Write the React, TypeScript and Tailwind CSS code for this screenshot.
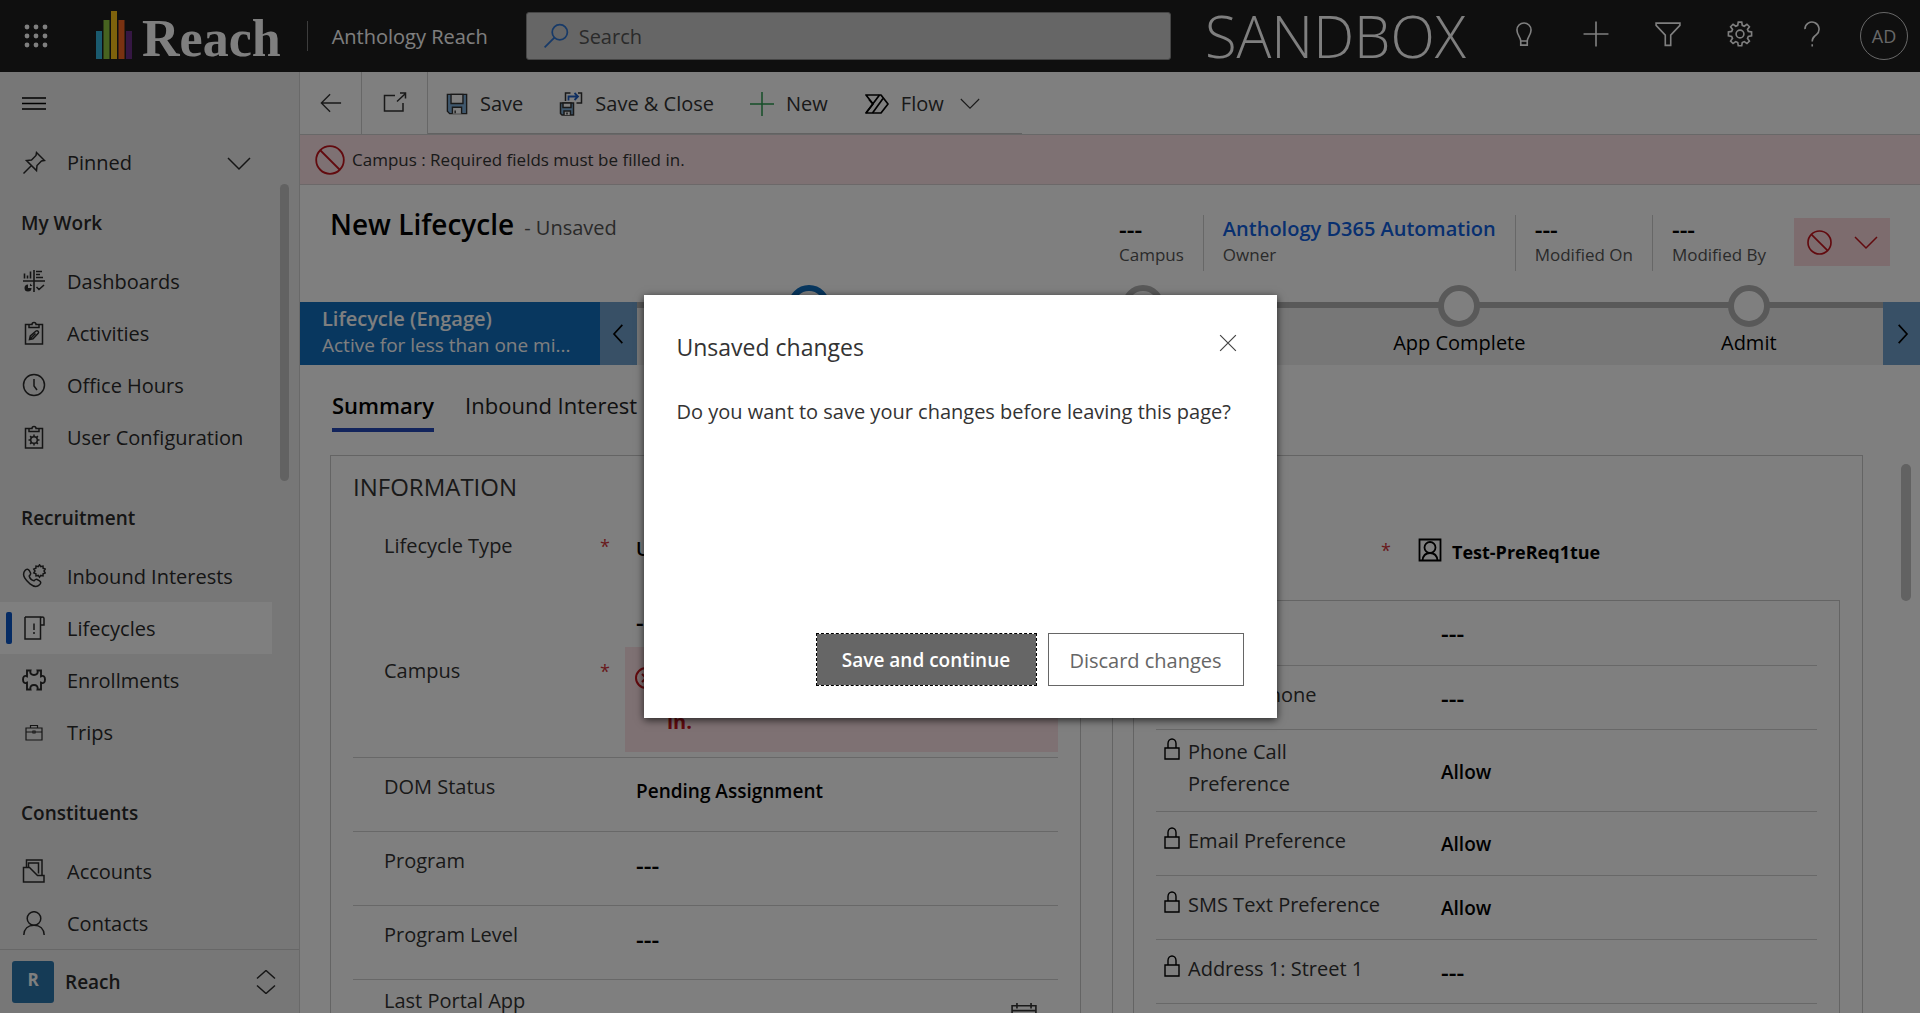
import type { ReactNode } from "react";

type IconProps = { w?: number; h?: number; vb?: string; sw?: number; className?: string; children: ReactNode };

function Svg({ w = 24, h = 24, vb = "0 0 24 24", sw = 1.5, className = "", children }: IconProps) {
  return (
    <svg
      width={w}
      height={h}
      viewBox={vb}
      fill="none"
      stroke="currentColor"
      strokeWidth={sw}
      aria-hidden="true"
      className={`shrink-0 ${className}`}
    >
      {children}
    </svg>
  );
}

const gearPath =
  "M10.4 1h3.2l.5 3 1.8.8 2.500-1.800 2.300 2.300-1.800 2.500.8 1.800 3 .5v3.600l-3 .5-.8 1.800 1.800 2.500-2.300 2.300-2.500-1.800-1.800.8-.5 3h-3.200l-.5-3-1.800-.8-2.500 1.800-2.300-2.300 1.800-2.500-.8-1.800-3-.5v-3.600l3-.5.8-1.800-1.800-2.500 2.300-2.300 2.500 1.800 1.800-.8z";

/* ---------- top bar ---------- */

function Waffle() {
  const at = [3, 12, 21];
  return (
    <Svg>
      {at.map((y) => at.map((x) => <circle key={`${x}-${y}`} cx={x} cy={y} r="2.4" fill="currentColor" stroke="none" />))}
    </Svg>
  );
}

function ReachLogo() {
  return (
    <span className="flex items-end gap-[10px]">
      <svg width="36" height="48" viewBox="0 0 36 48" aria-hidden="true" className="mb-[2px]">
        <rect x="0" y="20" width="6" height="28" fill="#35b4dc" />
        <rect x="7.5" y="9" width="6" height="39" fill="#8fc640" />
        <rect x="15" y="0" width="6" height="48" fill="#fcc419" />
        <rect x="22.5" y="9" width="6" height="39" fill="#f26522" />
        <rect x="30" y="20" width="6" height="28" fill="#6b2f87" />
      </svg>
      <span className="text-[52px] leading-[44px] font-bold font-['Liberation_Serif',serif]">Reach</span>
    </span>
  );
}

function TopBar() {
  const iconBtn = "flex w-[72px] justify-center";
  return (
    <header className="flex h-[72px] shrink-0 items-center bg-[#1e1e1e] pr-3 text-white">
      <button type="button" aria-label="App launcher" className="ml-6 flex">
        <Waffle />
      </button>
      <div className="ml-12">
        <ReachLogo />
      </div>
      <span className="ml-[26px] h-[30px] w-px bg-[#7a7a7a]" />
      <span className="ml-6 pt-[2px] text-[20px] whitespace-nowrap">Anthology Reach</span>
      <label className="ml-[38px] flex h-12 flex-1 items-center gap-[10px] rounded-[3px] border border-[#8a8a8a] bg-[#cccccc] px-4 text-[#2f74d0]">
        <Svg w={26} h={26} sw={1.6}>
          <circle cx="15.5" cy="8.5" r="7" />
          <path d="M10.5 13.5 1.5 22.5" />
        </Svg>
        <input
          type="text"
          aria-label="Search"
          placeholder="Search"
          className="min-w-0 flex-1 bg-transparent pt-[2px] text-[20px] text-[#555] outline-none placeholder:text-[#555]"
        />
      </label>
      <span className="mx-[34px] text-[58px] leading-[72px] font-light">SANDBOX</span>
      <div className="-ml-3 flex items-center">
        <button type="button" aria-label="Ideas" className={iconBtn}>
          <Svg w={26} h={26} className="-mt-1">
            <path d="M9 18.5c0-3.500-3.500-5.500-3.500-10.200a6.500 6.500 0 0 1 13 0c0 4.700-3.500 6.700-3.500 10.200zM9 18.500v3.800h6v-3.800" />
          </Svg>
        </button>
        <button type="button" aria-label="Add" className={iconBtn}>
          <Svg w={26} h={26} className="-mt-1">
            <path d="M12 0.500v23M0.500 12h23" />
          </Svg>
        </button>
        <button type="button" aria-label="Filter" className={iconBtn}>
          <Svg w={26} h={26} className="-mt-1">
            <path d="M1 2h22v2l-8.500 9v9.500h-5V13L1 4z" />
          </Svg>
        </button>
        <button type="button" aria-label="Settings" className={iconBtn}>
          <Svg w={26} h={26} className="-mt-1">
            <path d={gearPath} />
            <circle cx="12" cy="12" r="3.600" />
          </Svg>
        </button>
        <button type="button" aria-label="Help" className={iconBtn}>
          <Svg w={26} h={26} className="-mt-1">
            <path d="M5.500 7.500a6.500 6.500 0 1 1 10.600 5c-2.600 2.100-3.900 3.200-3.900 6.500M12.200 21.500v2" />
          </Svg>
        </button>
      </div>
      <button
        type="button"
        aria-label="Account"
        className="ml-3 flex h-12 w-12 items-center justify-center rounded-full border border-[#d0d0d0] text-[18px] text-[#d0d0d0]"
      >
        AD
      </button>
    </header>
  );
}

/* ---------- side navigation ---------- */

const navIcons: Record<string, ReactNode> = {
  Dashboards: (
    <Svg sw={1.6}>
      <path d="M12 1v22M1 12h22M2.500 4.500v5M5.500 6.500v3M8.500 2.500v7M14 2.500h6M14 5.500h4M14 8.500h7M14.500 18l2.500 2.500 5-4.500" />
      <path d="M6 15.500a3.500 3.500 0 1 0 3.500 3.500H6zM8 14.500v2.500h2.500z" fill="currentColor" stroke="none" />
    </Svg>
  ),
  Activities: (
    <Svg>
      <path d="M8 3.500H3.500v19.500h17V3.500H16M7 6.500V3.500h3a2 2 0 0 1 4 0h3v3z" />
      <path d="M7.500 18.500l.8-3.500 5.700-5c1.500-1 3.300.800 2.200 2.200l-5.200 5.600zM8.500 17.500l5-5" />
    </Svg>
  ),
  "Office Hours": (
    <Svg>
      <circle cx="12" cy="12" r="10.500" />
      <path d="M12 6v7l3 4" />
    </Svg>
  ),
  "User Configuration": (
    <Svg>
      <path d="M8 3.500H3.500v19.500h17V3.500H16M7 6.500V3.500h3a2 2 0 0 1 4 0h3v3z" />
      <circle cx="12" cy="15" r="3.300" />
      <path d="M12 9.500v2M12 18.500v2M6.500 15h2M15.500 15h2M8.100 11.100l1.500 1.500M14.400 17.400l1.500 1.500M15.900 11.100l-1.500 1.500M9.600 17.400l-1.500 1.500" />
    </Svg>
  ),
  "Inbound Interests": (
    <Svg>
      <path d="M3 6.500c1.500-2 3.300-1.500 4.200 0l1.300 2.300c.7 1.300-.3 2.200-1.300 3.200.5 2 2.800 4.300 4.800 4.800 1-1 2-2 3.200-1.300l2.300 1.300c1.500 1 1.700 2.500 0 4-2.300 2.300-6 1.800-9.500-1C4.500 17-1 11.500 3 6.500z" />
      <path d="M17.500.8l1.300 1.800 2.200-.5.1 2.200 2.100.8-1.200 1.900 1.200 1.900-2.100.800-.1 2.200-2.200-.5-1.300 1.800-1.300-1.800-2.200.5-.1-2.200-2.100-.8L13 7l-1.200-1.900 2.100-.8.100-2.200 2.200.5z" />
    </Svg>
  ),
  Lifecycles: (
    <Svg>
      <path d="M3 1h15.500v5M18.500 9v14H3V1M18.500 2.500c0-2 3.500-2 3.500 0V9h-3.500z" />
      <path d="M12 7.500v6.500M12 16v2" />
    </Svg>
  ),
  Enrollments: (
    <Svg sw={1.9}>
      <path d="M5 2.500h3.500c-.8 3 1 4.500 3.500 4.500s4.300-1.500 3.500-4.500H19v5.800c2.500-1.300 4 .5 4 3.200s-1.500 4.500-4 3.200v6.800h-3.500c.8-3-1-4.500-3.500-4.500s-4.300 1.500-3.500 4.500H5v-6.800c-2.500 1.300-4-.5-4-3.200s1.500-4.500 4-3.200z" />
    </Svg>
  ),
  Trips: (
    <Svg sw={1.2}>
      <path d="M4 8h16v12H4zM8.500 8V5.500h7V8M4 12h6.500M13.500 12H20M11 11h2v2h-2z" />
    </Svg>
  ),
  Accounts: (
    <Svg>
      <path d="M4.500 8V1h15.500v15" />
      <path d="M6.500 8V4h10v10.500" />
      <path d="M1.500 8.500h6l8 8h6.500v6.500H1.500z" />
    </Svg>
  ),
  Contacts: (
    <Svg>
      <circle cx="12" cy="7.500" r="6.800" />
      <path d="M1.800 24c.3-6 4.200-9.700 10.200-9.700S21.900 18 22.200 24" />
    </Svg>
  ),
};

const navSections = [
  { title: "My Work", items: ["Dashboards", "Activities", "Office Hours", "User Configuration"] },
  { title: "Recruitment", items: ["Inbound Interests", "Lifecycles", "Enrollments", "Trips"] },
  { title: "Constituents", items: ["Accounts", "Contacts"] },
];

function SideNav() {
  return (
    <nav aria-label="Site map" className="flex w-[300px] shrink-0 flex-col border-r border-[#d2d2d2] bg-[#efefef] text-[#2b2b2b]">
      <button type="button" aria-label="Toggle navigation" className="mt-5 ml-5 flex w-fit text-black">
        <Svg w={26}>
          <path d="M1 6h24M1 11.500h24M1 17h24" />
        </Svg>
      </button>
      <button type="button" className="mt-[26px] flex h-[42px] shrink-0 items-center px-[22px] text-left">
        <Svg>
          <path d="M14.500 1.500l8 8-3 .5-4.500 4.500-.5 5-10-10 5-.5L14 4.500zM9.500 14.500L1.500 22.500" />
        </Svg>
        <span className="ml-[21px] flex-1 text-[20px]">Pinned</span>
        <Svg className="mr-[26px]">
          <path d="M1 7l11 11L23 7" />
        </Svg>
      </button>
      <div className="relative min-h-0 flex-1 overflow-hidden pt-1">
        <span className="absolute top-0 right-[10px] h-[297px] w-[9px] rounded-full bg-[#c4c4c4]" />
        {navSections.map((section) => (
          <section key={section.title} className={section.title === "My Work" ? "" : "pt-5"}>
            <h2 className="h-[67px] pt-[19px] pl-[21px] text-[19px] leading-8 font-semibold">{section.title}</h2>
            <ul>
              {section.items.map((item) => {
                const current = item === "Lifecycles";
                return (
                  <li key={item}>
                    <a
                      href="#"
                      aria-current={current ? "page" : undefined}
                      className={`relative flex h-[52px] w-[272px] items-center pl-[22px] text-[20px] ${current ? "bg-white" : ""}`}
                    >
                      {current && <span className="absolute top-[10px] left-[6px] h-8 w-[6px] rounded-[2px] bg-[#0b57c9]" />}
                      {navIcons[item]}
                      <span className="ml-[21px] pt-[2px]">{item}</span>
                    </a>
                  </li>
                );
              })}
            </ul>
          </section>
        ))}
      </div>
      <button type="button" className="flex h-16 shrink-0 items-center border-t border-[#cfcfcf] pl-3 text-left">
        <span className="flex h-[42px] w-[42px] items-center justify-center rounded-[3px] bg-[#2b76ad] pb-1 text-[17px] font-bold text-white">R</span>
        <span className="ml-[11px] flex-1 pt-[2px] text-[19px] font-semibold">Reach</span>
        <Svg className="mr-[21px]">
          <path d="M3 8.500l9-8 9 8M3 15.500l9 8 9-8" />
        </Svg>
      </button>
    </nav>
  );
}

/* ---------- command bar ---------- */

function CommandBar() {
  const cmd = "flex items-center gap-3";
  return (
    <div className="flex h-[63px] shrink-0 border-b border-[#d0d0d0] text-[20px] text-[#333]">
      <button type="button" aria-label="Back" className="flex w-[62px] items-center justify-center border-r border-[#cfcfcf]">
        <Svg w={22} h={22}>
          <path d="M23 12H1.500M11 2.500L1.500 12l9.500 9.500" />
        </Svg>
      </button>
      <button type="button" aria-label="Open in new window" className="flex w-[66px] items-center justify-center border-r border-[#cfcfcf]">
        <Svg>
          <path d="M12 4.500H1.500v15.500H20v-8M14 10.500L22.500 2.500M17 2h5.500v5.500" />
        </Svg>
      </button>
      <div className="flex w-[594px] gap-9 border-b border-[#c4c4c4] pt-[2px] pl-[18px]">
        <button type="button" className={cmd}>
          <Svg w={22} h={22}>
            <path d="M1.500 1.500h21v21H4l-2.500-2.500z" fill="#7fb0dc" />
            <path d="M5.500 1.500h13v10h-13z" fill="#fff" />
            <path d="M7 22.500v-7h10v7M10 22v-3" fill="#fff" />
          </Svg>
          <span>Save</span>
        </button>
        <button type="button" className={cmd}>
          <Svg w={24} h={25}>
            <path d="M1.500 11.500h13v12H3l-1.500-1.500z" fill="#7fb0dc" />
            <path d="M4 11.500h8v4.500H4zM5 23.500v-4h6.500v4M8 23v-2" fill="#fff" />
            <path d="M6.500 9.500v-8h5M19 1.500h3.500v10h-5" />
            <path d="M9.500 9V5h9M15.500 1.500L19 5l-3.500 3.500" stroke="#1f5fc4" strokeWidth="1.800" />
          </Svg>
          <span>Save &amp; Close</span>
        </button>
        <button type="button" className={cmd}>
          <Svg className="text-[#2a9d50]">
            <path d="M12 0v24M0 12h24" />
          </Svg>
          <span>New</span>
        </button>
        <button type="button" className={cmd}>
          <Svg w={25} h={22} vb="0 0 25 22" sw={1.7} className="text-black">
            <path d="M2 2H17L24 11 17 20H2L9 11z" strokeLinejoin="round" />
            <path d="M2 20L15.500 2M8.500 20L19 5.500" />
            <path d="M5 6.500L9 11" />
          </Svg>
          <span>Flow</span>
          <Svg w={20} h={20} className="ml-1" sw={1.3}>
            <path d="M1 6l11 11L23 6" />
          </Svg>
        </button>
      </div>
    </div>
  );
}

function ProhibitIcon({ size }: { size: number }) {
  return (
    <Svg w={size} h={size} vb="0 0 30 30" sw={size > 26 ? 1.8 : 2} className="text-[#c4141c]">
      <circle cx="15" cy="15" r="13.800" />
      <path d="M5.500 5.500l19 19" />
    </Svg>
  );
}

/* ---------- record header ---------- */

const facts = [
  { label: "Campus", value: "---" },
  { label: "Owner", value: "Anthology D365 Automation", link: true },
  { label: "Modified On", value: "---" },
  { label: "Modified By", value: "---" },
];

function RecordHeader() {
  return (
    <div className="flex h-[117px] shrink-0 pt-[30px] pr-[30px] pl-[30px]">
      <div className="-mt-3 flex h-9 flex-1 items-baseline gap-[10px]">
        <h1 className="text-[28px] font-semibold text-black">New Lifecycle</h1>
        <span className="text-[20px] text-[#555]">- Unsaved</span>
      </div>
      <dl className="flex h-[56px] divide-x divide-[#cfcfcf]">
        {facts.map((f) => (
          <div key={f.label} className="flex flex-col-reverse justify-end px-[19px]">
            <dt className="text-[17px] leading-[24px] text-[#555]">{f.label}</dt>
            <dd className={`leading-[28px] font-semibold text-black ${f.link ? "text-[20px]" : "text-[24px]"}`}>
              {f.link ? (
                <a href="#" className="text-[#1160e0]">
                  {f.value}
                </a>
              ) : (
                f.value
              )}
            </dd>
          </div>
        ))}
      </dl>
      <button
        type="button"
        aria-label="Show notifications"
        className="mt-[3px] ml-[9px] flex h-12 w-24 items-center justify-center gap-[22px] bg-[#fbd8dc] text-[#c4141c]"
      >
        <ProhibitIcon size={25} />
        <Svg>
          <path d="M1 7l11 11L23 7" />
        </Svg>
      </button>
    </div>
  );
}

/* ---------- process flow ---------- */

const stages = [
  { name: "", grow: "flex-[344]", active: true },
  { name: "", grow: "flex-[322]", active: false },
  { name: "App Complete", grow: "flex-[310]", active: false },
  { name: "Admit", grow: "flex-[268]", active: false },
];

function ProcessFlow() {
  return (
    <div className="flex h-[63px] shrink-0">
      <button type="button" className="w-[300px] bg-[#106ebe] pb-1 pl-[22px] text-left text-white">
        <span className="block text-[20px] leading-[27px] font-semibold">Lifecycle (Engage)</span>
        <span className="block text-[19px] leading-[27px]">Active for less than one mi...</span>
      </button>
      <button type="button" aria-label="Previous stage" className="flex w-[37px] items-center justify-center bg-[#70a0cc] text-black">
        <Svg w={20} h={20} sw={2}>
          <path d="M16 1L6 12l10 11" />
        </Svg>
      </button>
      <ol className="flex flex-1 border-t-[6px] border-[#b2b2b2] bg-[#efefef]">
        {stages.map((s, i) => (
          <li key={i} className={`${s.grow} -mt-[23px] flex flex-col items-center`}>
            <span className={`h-[42px] w-[42px] rounded-full border-[6px] bg-white ${s.active ? "border-[#106ebe]" : "border-[#b2b2b2]"}`} />
            <span className="text-[20px] leading-[32px] text-black">{s.name}</span>
          </li>
        ))}
      </ol>
      <button type="button" aria-label="Next stage" className="flex w-[37px] items-center justify-center bg-[#70a0cc] text-black">
        <Svg w={20} h={20} sw={2}>
          <path d="M8 1l10 11L8 23" />
        </Svg>
      </button>
    </div>
  );
}

/* ---------- form ---------- */

function FieldValue({ value }: { value: string }) {
  return <span className={value === "---" ? "text-[24px]" : "text-[19px]"}>{value}</span>;
}

function LeftRow({ label, value, tight, icon }: { label: string; value: string; tight?: boolean; icon?: ReactNode }) {
  return (
    <div className="flex h-[74px] shrink-0 border-b border-[#d0d0d0] pl-[31px] text-[20px]">
      <dt className={`w-[252px] leading-8 text-[#333] ${tight ? "pt-[5px]" : "pt-[13px]"}`}>{label}</dt>
      <dd className="flex flex-1 pt-[17px] leading-8 font-semibold text-black">
        <FieldValue value={value} />
      </dd>
      {icon}
    </div>
  );
}

function CalendarIcon() {
  return (
    <Svg w={26} h={26} className="mt-[22px] mr-[21px] text-[#333]">
      <path d="M1 3.500h22V23H1zM1 8h22M5.500 1v5M18.500 1v5M5 12h3M10.500 12h3M16 12h3M5 16h3M10.500 16h3M16 16h3" />
    </Svg>
  );
}

function InformationCard() {
  const star = "w-[36px] text-[18px] leading-8 text-[#d13438]";
  return (
    <section className="flex flex-col border border-[#c9c9c9] px-[22px] pt-[15px]">
      <h2 className="text-[24px] leading-8 text-[#333]">INFORMATION</h2>
      <dl className="flex flex-col">
        <div className="flex h-[98px] pt-[27px] pl-[31px] text-[20px]">
          <dt className="w-[216px] leading-8 text-[#333]">Lifecycle Type</dt>
          <span className={star}>*</span>
          <dd className="pt-[3px] text-[19px] leading-8 font-semibold text-black">U</dd>
        </div>
        <div className="flex h-[157px] border-b border-[#d0d0d0] pl-[31px] text-[20px]">
          <dt className="w-[216px] pt-[54px] leading-8 text-[#333]">Campus</dt>
          <span className={`${star} pt-[54px]`}>*</span>
          <dd className="flex-1">
            <p className="pt-[5px] pb-[9px] text-[24px] leading-8 font-semibold text-black">---</p>
            <div className="-ml-[11px] flex h-[105px] gap-[10px] bg-[#fde2e6] pt-[9px] pl-[10px] font-bold text-[#c4141c]">
              <Svg w={22} h={44} vb="0 0 22 44" sw={2}>
                <circle cx="11" cy="22" r="10" />
                <path d="M7 18l8 8M15 18l-8 8" />
              </Svg>
              <span className="flex items-end pb-[8px] leading-[44px]">in.</span>
            </div>
          </dd>
        </div>
        <LeftRow label="DOM Status" value="Pending Assignment" />
        <LeftRow label="Program" value="---" />
        <LeftRow label="Program Level" value="---" />
        <LeftRow label="Last Portal App" value="" tight icon={<CalendarIcon />} />
      </dl>
    </section>
  );
}

function LockIcon() {
  return (
    <Svg w={16} h={22} vb="0 0 16 22" sw={1.4} className="mt-[2px] text-black">
      <path d="M1 10h14v11H1zM4 10V5.500a4 4.500 0 0 1 8 0V10" />
    </Svg>
  );
}

const contactRows = [
  { label: "Mobile Phone", value: "---", tall: false },
  { label: "Phone Call Preference", value: "Allow", tall: true },
  { label: "Email Preference", value: "Allow", tall: false },
  { label: "SMS Text Preference", value: "Allow", tall: false },
  { label: "Address 1: Street 1", value: "---", tall: false },
];

function ContactCard() {
  return (
    <section className="flex flex-col border border-[#c9c9c9] pr-[22px] pl-5">
      <div className="flex h-[144px] justify-end pt-[78px] text-[20px] leading-8">
        <span className="mr-[27px] text-[18px] text-[#d13438]">*</span>
        <a href="#" className="flex w-[422px] gap-[10px] pt-[2px] text-[18px] font-bold text-black">
          <Svg className="mt-[2px]" sw={1.8}>
            <path d="M1.500 1.500h21v21h-21z" />
            <circle cx="12" cy="9.500" r="5.500" />
            <path d="M4.500 22.500c.5-5 3.500-7.500 7.500-7.500s7 2.500 7.500 7.500" />
          </Svg>
          Test-PreReq1tue
        </a>
      </div>
      <dl className="flex-1 border border-b-0 border-[#c9c9c9] px-[22px] text-[20px] leading-8">
        <div className="flex h-[65px] justify-end border-b border-[#d0d0d0]">
          <dd className="w-[376px] pt-4 font-semibold text-black">
            <FieldValue value="---" />
          </dd>
        </div>
        {contactRows.map((r) => (
          <div key={r.label} className={`flex border-b border-[#d0d0d0] pl-2 ${r.tall ? "h-[82px]" : "h-16"}`}>
            <dt className={`flex flex-1 gap-2 text-[#333] ${r.tall ? "pt-[6px]" : "pt-[13px]"}`}>
              <LockIcon />
              <span className="w-[200px]">{r.label}</span>
            </dt>
            <dd className={`w-[376px] font-semibold text-black ${r.tall ? "pt-[26px]" : "pt-[16px]"}`}>
              <FieldValue value={r.value} />
            </dd>
          </div>
        ))}
      </dl>
    </section>
  );
}

/* ---------- dialog ---------- */

function UnsavedDialog() {
  return (
    <div className="absolute inset-0 flex items-center justify-center bg-black/50">
      <div
        role="dialog"
        aria-modal="true"
        aria-labelledby="dialog-title"
        className="flex h-[423px] w-[633px] flex-col bg-white px-[33px] pt-9 pb-8 shadow-[0_2px_8px_rgba(0,0,0,0.7)]"
      >
        <div className="flex items-start justify-between">
          <h2 id="dialog-title" className="text-[23px] leading-8 text-[#333]">
            Unsaved changes
          </h2>
          <button type="button" aria-label="Close" className="mt-[3px] mr-[7px] text-[#444]">
            <Svg w={18} h={18} sw={1.6}>
              <path d="M1.500 1.500l21 21M22.500 1.500l-21 21" />
            </Svg>
          </button>
        </div>
        <p className="mt-[33px] flex-1 text-[20px] leading-8 whitespace-nowrap text-[#333]">
          Do you want to save your changes before leaving this page?
        </p>
        <div className="flex justify-end gap-[11px]">
          <button
            type="button"
            className="h-[53px] w-[221px] border border-dashed border-black bg-[#666] bg-clip-padding pt-[2px] text-[19px] font-semibold text-white"
          >
            Save and continue
          </button>
          <button type="button" className="h-[53px] w-[196px] border border-[#666] bg-white pt-[2px] text-[20px] text-[#666]">
            Discard changes
          </button>
        </div>
      </div>
    </div>
  );
}

export default function App() {
  return (
    <div className="relative flex h-screen flex-col overflow-hidden bg-white font-['Open_Sans',sans-serif]">
      <TopBar />
      <div className="flex min-h-0 flex-1">
        <SideNav />
        <main className="flex min-w-0 flex-1 flex-col">
          <CommandBar />
          <p role="alert" className="flex h-[50px] shrink-0 items-center gap-[7px] border-b border-[#d8d0d2] bg-[#fce3e7] pl-[15px] text-[17px] text-[#333]">
            <ProhibitIcon size={30} />
            Campus : Required fields must be filled in.
          </p>
          <RecordHeader />
          <ProcessFlow />
          <div role="tablist" className="flex h-[90px] shrink-0 items-start gap-[31px] pt-6 pl-8 text-[22px] leading-8">
            <button type="button" role="tab" aria-selected="true" className="border-b-4 border-[#2448b8] pb-[7px] font-semibold text-black">
              Summary
            </button>
            <button type="button" role="tab" aria-selected="false" className="text-[#222]">
              Inbound Interest
            </button>
          </div>
          <div className="relative grid min-h-0 flex-1 grid-cols-2 gap-[31px] overflow-hidden pr-[57px] pl-[30px]">
            <InformationCard />
            <ContactCard />
            <span className="absolute top-[9px] right-[9px] h-[137px] w-[10px] rounded-full bg-[#c4c4c4]" />
          </div>
        </main>
      </div>
      <UnsavedDialog />
    </div>
  );
}
